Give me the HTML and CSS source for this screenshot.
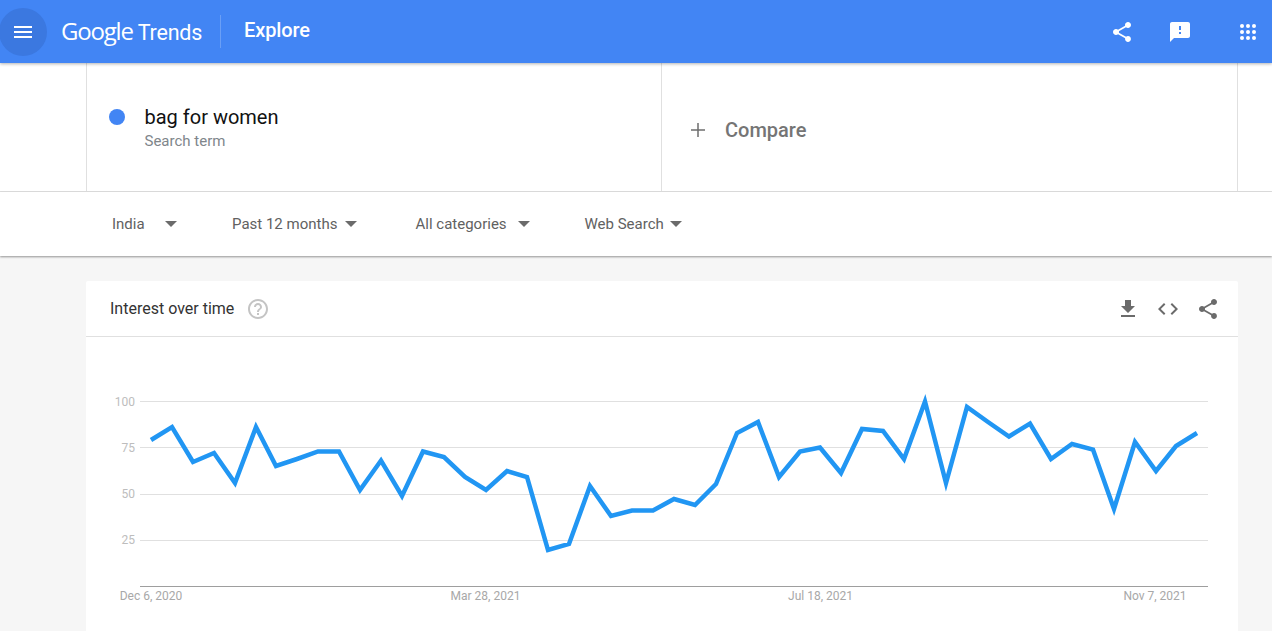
FILE: index.html
```html
<!DOCTYPE html>
<html lang="en">
<head>
<meta charset="utf-8">
<title>Google Trends - Explore</title>
<link rel="stylesheet" href="styles.css">
</head>
<body>
<header class="appbar">
  <button class="menu-btn" aria-label="Menu">
    <svg width="24" height="24" viewBox="0 0 24 24"><path fill="#fff" d="M3 18h18v-2H3v2zm0-5h18v-2H3v2zm0-7v2h18V6H3z"/></svg>
  </button>
  <div class="logo">Google <span class="logo-sub">Trends</span></div>
  <div class="page-title">Explore</div>
  <div class="appbar-actions">
    <svg class="bar-icon" width="24" height="24" viewBox="0 0 24 24"><path fill="#fff" d="M18 16.08c-.76 0-1.44.3-1.96.77L8.91 12.7c.05-.23.09-.46.09-.7s-.04-.47-.09-.7l7.05-4.11c.54.5 1.25.81 2.04.81 1.66 0 3-1.34 3-3s-1.34-3-3-3-3 1.34-3 3c0 .24.04.47.09.7L8.04 9.81C7.5 9.31 6.79 9 6 9c-1.66 0-3 1.34-3 3s1.34 3 3 3c.79 0 1.5-.31 2.04-.81l7.12 4.16c-.05.21-.08.43-.08.65 0 1.61 1.31 2.92 2.92 2.92 1.61 0 2.92-1.31 2.92-2.92s-1.31-2.92-2.92-2.92z"/></svg>
    <svg class="bar-icon" width="24" height="24" viewBox="0 0 24 24"><path fill="#fff" d="M20 2H4c-1.1 0-2 .9-2 2v18l4-4h14c1.100 0 2-.9 2-2V4c0-1.100-.9-2-2-2zm-7 12h-2v-2h2v2zm0-4h-2V6h2v4z"/></svg>
    <svg class="bar-icon apps-icon" width="24" height="24" viewBox="0 0 24 24"><g fill="#fff"><circle cx="6" cy="6" r="2"/><circle cx="12" cy="6" r="2"/><circle cx="18" cy="6" r="2"/><circle cx="6" cy="12" r="2"/><circle cx="12" cy="12" r="2"/><circle cx="18" cy="12" r="2"/><circle cx="6" cy="18" r="2"/><circle cx="12" cy="18" r="2"/><circle cx="18" cy="18" r="2"/></g></svg>
  </div>
</header>

<section class="terms">
  <div class="terms-inner">
    <div class="term">
      <span class="term-dot"></span>
      <div>
        <div class="term-name">bag for women</div>
        <div class="term-kind">Search term</div>
      </div>
    </div>
    <div class="compare">
      <svg width="16" height="16" viewBox="0 0 16 16"><path fill="#6e6e6e" d="M7.250 1h1.500v6.250H15v1.500H8.750V15h-1.500V8.750H1v-1.500h6.250z"/></svg>
      <span class="compare-label">Compare</span>
    </div>
  </div>
</section>

<nav class="filters">
  <div class="filter filter-geo"><span>India</span><i class="caret"></i></div>
  <div class="filter filter-time"><span>Past 12 months</span><i class="caret"></i></div>
  <div class="filter filter-cat"><span>All categories</span><i class="caret"></i></div>
  <div class="filter filter-prop"><span>Web Search</span><i class="caret"></i></div>
</nav>

<main class="content">
  <article class="card">
    <div class="card-head">
      <h2 class="card-title">Interest over time</h2>
      <svg class="help" width="24" height="24" viewBox="0 0 24 24"><path fill="#c4c4c4" d="M11 18h2v-2h-2v2zm1-16C6.480 2 2 6.480 2 12s4.480 10 10 10 10-4.480 10-10S17.520 2 12 2zm0 18c-4.410 0-8-3.590-8-8s3.590-8 8-8 8 3.590 8 8-3.590 8-8 8zm0-14c-2.210 0-4 1.790-4 4h2c0-1.100.9-2 2-2s2 .9 2 2c0 2-3 1.750-3 5h2c0-2.250 3-2.500 3-5 0-2.210-1.790-4-4-4z"/></svg>
      <div class="card-actions">
        <svg width="24" height="24" viewBox="0 0 24 24"><path fill="#6b6b6b" d="M19 9h-4V3H9v6H5l7 7 7-7zM5 18v2h14v-2H5z"/></svg>
        <svg width="24" height="24" viewBox="0 0 24 24"><path fill="#6b6b6b" d="M9.400 16.600 4.800 12l4.600-4.600L8 6l-6 6 6 6 1.400-1.400zm5.200 0 4.600-4.600-4.600-4.600L16 6l6 6-6 6-1.400-1.400z"/></svg>
        <svg width="24" height="24" viewBox="0 0 24 24"><path fill="#6b6b6b" d="M18 16.080c-.76 0-1.440.3-1.960.77L8.910 12.700c.05-.23.09-.46.09-.7s-.04-.47-.09-.7l7.050-4.110c.54.5 1.250.81 2.040.81 1.660 0 3-1.340 3-3s-1.340-3-3-3-3 1.340-3 3c0 .24.04.47.09.7L8.040 9.810C7.500 9.310 6.790 9 6 9c-1.660 0-3 1.340-3 3s1.340 3 3 3c.79 0 1.500-.31 2.040-.81l7.120 4.160c-.05.21-.08.43-.08.65 0 1.610 1.310 2.920 2.920 2.920 1.610 0 2.920-1.310 2.920-2.920s-1.310-2.920-2.920-2.920z"/></svg>
      </div>
    </div>
    <svg class="chart" width="1152" height="294" viewBox="86 337 1152 294">
      <g class="grid">
        <line x1="140" y1="401.500" x2="1208" y2="401.500"/>
        <line x1="140" y1="447.500" x2="1208" y2="447.500"/>
        <line x1="140" y1="494.500" x2="1208" y2="494.500"/>
        <line x1="140" y1="540.500" x2="1208" y2="540.500"/>
      </g>
      <line class="axis" x1="140" y1="586.500" x2="1208" y2="586.500"/>
      <g class="y-labels">
        <text x="135" y="406">100</text>
        <text x="135" y="452">75</text>
        <text x="135" y="498">50</text>
        <text x="135" y="544">25</text>
      </g>
      <g class="x-labels">
        <text x="151" y="600">Dec 6, 2020</text>
        <text x="485.500" y="600">Mar 28, 2021</text>
        <text x="820.500" y="600">Jul 18, 2021</text>
        <text x="1155" y="600">Nov 7, 2021</text>
      </g>
      <polyline class="trend" points="151,440 172,427 193,462 214,453 235,483 256,427 276,466 297,459 318,451.500 339,451.500 360,490 381,460.500 402,496 423,451.500 444,457 465,477 486,490 507,471 527,477 548,550 569,544 590,486 611,516 632,510.500 653,510.500 674,499 695,505 716,484 737,433 758,422 779,477 800,451.500 820,447.500 841,473 862,429 883,431 904,459 925,401.500 946,483 967,407 988,422 1009,436.500 1030,423.500 1051,459 1072,444 1093,449.500 1114,509 1135,442 1156,471 1176,446 1197,433"/>
    </svg>
  </article>
</main>
</body>
</html>
```
FILE: styles.css
```css
* { box-sizing: border-box; }
html, body { margin: 0; height: 631px; overflow: hidden; }
body { background: #f6f6f6; font-family: Roboto, "Liberation Sans", sans-serif; }

.appbar {
  position: relative;
  z-index: 2;
  display: flex;
  align-items: center;
  height: 63px;
  background: #4285f4;
  box-shadow: 0 1px 3px rgba(0, 0, 0, .3);
  color: #fff;
}
.menu-btn {
  display: flex;
  align-items: center;
  justify-content: center;
  flex: none;
  width: 48px;
  height: 48px;
  margin-left: -1px;
  padding: 0;
  border: 0;
  border-radius: 50%;
  background: #3b78e0;
}
.logo {
  margin-left: 14px;
  width: 160px;
  height: 33px;
  border-right: 1px solid #6a9ff6;
  font: 500 24px/31px "Open Sans", sans-serif;
  letter-spacing: -1.2px;
  white-space: nowrap;
}
.logo-sub { font: 400 21.500px/31px Roboto, sans-serif; letter-spacing: -.2px; }
.page-title { margin-left: 23px; font-size: 20px; font-weight: 500; letter-spacing: -.1px; position: relative; top: -2px; }
.appbar-actions { display: flex; gap: 34px; margin-left: auto; margin-right: 12px; }
.apps-icon { margin-left: 10px; }

.terms { background: #fff; border-bottom: 1px solid #e0e0e0; height: 129px; }
.terms-inner {
  display: grid;
  grid-template-columns: 575px 576px;
  width: 1152px;
  height: 128px;
  margin-left: 86px;
  border-left: 1px solid #e0e0e0;
  border-right: 1px solid #e0e0e0;
}
.term { display: flex; align-items: center; gap: 19.500px; padding-left: 22px; border-right: 1px solid #e0e0e0; }
.term-dot { width: 16px; height: 16px; border-radius: 50%; background: #4285f4; margin-bottom: 20px; }
.term-name { font-size: 20px; line-height: 26px; color: #111; }
.term-kind { font-size: 15px; line-height: 20px; color: #80868b; margin-top: 1px; }
.compare { display: flex; align-items: center; gap: 19px; padding: 5px 0 0 28px; }
.compare-label { font-size: 20px; font-weight: 500; color: #757575; }

.filters {
  position: relative;
  z-index: 1;
  display: flex;
  align-items: center;
  height: 64px;
  padding-left: 112px;
  background: #fff;
  box-shadow: 0 1px 2px rgba(0, 0, 0, .4);
  font-size: 15px;
  color: #616161;
}
.filter { display: flex; align-items: center; }
.caret { width: 0; height: 0; border: 6px solid transparent; border-top-color: #6b6b6b; border-bottom: 0; }
.filter-geo { width: 120px; gap: 20px; }
.filter-time { width: 183.500px; gap: 8px; }
.filter-cat { width: 169px; gap: 11px; }
.filter-prop { gap: 6px; }

.content { padding: 25px 34px 0 86px; }
.card { background: #fff; border-radius: 2px; width: 1152px; height: 360px; }
.card-head {
  display: flex;
  align-items: center;
  height: 56px;
  padding: 0 18px 0 24px;
  border-bottom: 1px solid #e0e0e0;
}
.card-title { margin: 0; font-size: 16px; font-weight: 400; color: #333; }
.help { margin-left: 12px; }
.card-actions { display: flex; gap: 16px; margin-left: auto; }
.chart { display: block; }
.grid line { stroke: #e0e0e0; stroke-width: 1; }
.axis { stroke: #9e9e9e; stroke-width: 1; }
.y-labels text { font-size: 12px; fill: #bdbdbd; text-anchor: end; }
.x-labels text { font-size: 12px; fill: #a8a8a8; text-anchor: middle; }
.trend { fill: none; stroke: #2196f3; stroke-width: 4.500; stroke-linejoin: miter; }
```
